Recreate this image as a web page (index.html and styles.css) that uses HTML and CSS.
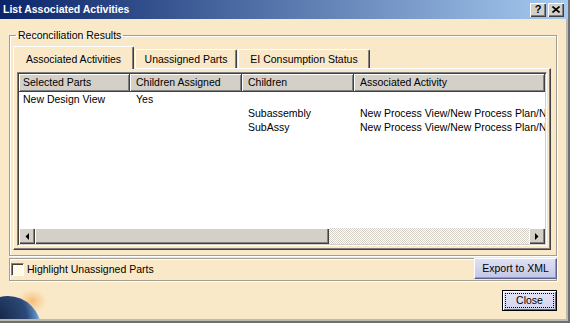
FILE: index.html
```html
<!DOCTYPE html>
<html lang="en">
<head>
    <meta charset="UTF-8" />
    <title>List Associated Activities</title>
    <link rel="stylesheet" href="styles.css">
</head>
<body>
    <div class="window">
        <div class="titlebar">
            <span class="title">List Associated Activities</span>
            <div class="caption-buttons">
                <span class="cap-btn help">?</span>
                <span class="cap-btn">
                    <svg width="8" height="7" viewBox="0 0 8 7"><path d="M0.5 0.5L7.5 6.5M7.5 0.5L0.5 6.5" stroke="#000" stroke-width="1.6"/></svg>
                </span>
            </div>
        </div>

        <div class="content">
            <fieldset class="group">
                <legend>Reconciliation Results</legend>

                <div class="tabs">
                    <div class="tab active" style="width: 121px">Associated Activities</div>
                    <div class="tab" style="width: 102px">Unassigned Parts</div>
                    <div class="tab" style="width: 132px">EI Consumption Status</div>
                </div>

                <div class="tab-panel">
                    <div class="list">
                        <div class="list-header">
                            <div class="hcell first">Selected Parts</div>
                            <div class="hcell">Children Assigned</div>
                            <div class="hcell">Children</div>
                            <div class="hcell">Associated Activity</div>
                        </div>
                        <div class="list-body">
                            <div class="row">
                                <div class="cell first">New Design View</div>
                                <div class="cell">Yes</div>
                                <div class="cell"></div>
                                <div class="cell"></div>
                            </div>
                            <div class="row">
                                <div class="cell first"></div>
                                <div class="cell"></div>
                                <div class="cell">Subassembly</div>
                                <div class="cell">New Process View/New Process Plan/N</div>
                            </div>
                            <div class="row">
                                <div class="cell first"></div>
                                <div class="cell"></div>
                                <div class="cell">SubAssy</div>
                                <div class="cell">New Process View/New Process Plan/N</div>
                            </div>
                        </div>
                        <div class="hscroll">
                            <span class="sb-btn">
                                <svg width="4" height="7" viewBox="0 0 4 7"><polygon points="4,0 4,7 0.5,3.5" fill="#000"/></svg>
                            </span>
                            <span class="sb-thumb"></span>
                            <span class="sb-track"></span>
                            <span class="sb-btn">
                                <svg width="4" height="7" viewBox="0 0 4 7"><polygon points="0,0 0,7 3.5,3.5" fill="#000"/></svg>
                            </span>
                        </div>
                    </div>
                </div>
            </fieldset>

            <div class="options">
                <span class="checkbox"></span>
                <span class="check-label">Highlight Unassigned Parts</span>
                <button class="btn export">Export to XML</button>
            </div>

            <div class="footer">
                <button class="btn close"><span class="focus">Close</span></button>
            </div>
        </div>

        <!-- logo in the corner -->
        <svg class="logo" width="56" height="34" viewBox="0 0 56 34">
            <defs>
                <radialGradient id="glow" cx="0.5" cy="0.5" r="0.5">
                    <stop offset="0" stop-color="#f3ad58" stop-opacity="0.75"/>
                    <stop offset="0.6" stop-color="#f6c786" stop-opacity="0.35"/>
                    <stop offset="1" stop-color="#fae9c8" stop-opacity="0"/>
                </radialGradient>
                <radialGradient id="globe" cx="0.3" cy="0.35" r="0.7">
                    <stop offset="0" stop-color="#142240"/>
                    <stop offset="0.7" stop-color="#2c4a78"/>
                    <stop offset="0.9" stop-color="#5b8fc4"/>
                    <stop offset="1" stop-color="#a8cce6"/>
                </radialGradient>
            </defs>
            <ellipse cx="32" cy="16" rx="17" ry="14" fill="url(#glow)"/>
            <circle cx="8" cy="44" r="33" fill="url(#globe)"/>
        </svg>
    </div>
</body>
</html>
```

FILE: styles.css
```css
:root {
    --beige: #fae9c8;
    --face: #d4d0c8;
    --shadow: #808080;
    --dark: #404040;
    --etch: #a29e92;
}

* {
    margin: 0;
    padding: 0;
    box-sizing: border-box;
}

body {
    font-family: "Liberation Sans", Arial, sans-serif;
    font-size: 10.5px;
    line-height: 13px;
    color: #000;
    background: var(--beige);
}

.window {
    position: relative;
    width: 570px;
    height: 323px;
    background: var(--beige);
    border-right: 2px solid #6f6f6f;
    border-bottom: 2px solid #6f6f6f;
    box-shadow: inset -2px -2px 0 #bdbab2;
    display: flex;
    flex-direction: column;
    overflow: hidden;
}

/* title bar */
.titlebar {
    height: 19px;
    display: flex;
    align-items: center;
    padding: 0 4px 0 3px;
    background: linear-gradient(to right, #0a246a, #a6caf0);
}

.title {
    color: #fff;
    font-weight: bold;
}

.caption-buttons {
    margin-left: auto;
    display: flex;
    gap: 2px;
}

.cap-btn {
    width: 16px;
    height: 14px;
    display: flex;
    align-items: center;
    justify-content: center;
    background: var(--face);
    box-shadow: inset 1px 1px 0 #fff, inset -1px -1px 0 var(--dark), inset -2px -2px 0 var(--shadow);
}

.cap-btn.help {
    font-weight: bold;
    font-size: 11px;
    padding-bottom: 1px;
}

/* main area */
.content {
    flex: 1;
    display: flex;
    flex-direction: column;
    padding: 0 11px 0 9px;
}

.group {
    margin-top: 10px;
    border: 1px solid var(--etch);
    box-shadow: 1px 1px 0 #fff, inset 1px 1px 0 #fff;
    padding: 4px 5px 5px 3px;
}

.group legend {
    margin-left: 3px;
    padding: 0 2px;
}

.tabs {
    display: flex;
    align-items: flex-end;
    gap: 1px;
    height: 22px;
}

.tab {
    height: 19px;
    padding-top: 3px;
    text-align: center;
    white-space: nowrap;
    background: var(--beige);
    border-top: 1px solid #fff;
    border-left: 1px solid #fff;
    border-right: 1px solid var(--dark);
    border-radius: 2px 2px 0 0;
    box-shadow: inset -1px 0 0 var(--shadow);
}

.tab.active {
    height: 23px;
    padding-top: 6px;
    margin-bottom: -1px;
    position: relative;
    z-index: 1;
}

.tab-panel {
    height: 182px;
    display: flex;
    flex-direction: column;
    padding: 3px;
    border-top: 1px solid #fff;
    border-left: 1px solid #fff;
    border-right: 1px solid var(--dark);
    border-bottom: 1px solid var(--dark);
    box-shadow: inset -1px -1px 0 var(--shadow);
}

/* list view */
.list {
    flex: 1;
    display: flex;
    flex-direction: column;
    background: #fff;
    padding: 1px;
    border-top: 1px solid var(--shadow);
    border-left: 1px solid var(--shadow);
    border-right: 1px solid #fff;
    border-bottom: 1px solid #fff;
    box-shadow: inset 1px 1px 0 var(--dark), inset -1px -1px 0 var(--face);
    overflow: hidden;
}

.list-header,
.row {
    display: grid;
    grid-template-columns: 111px 112px 112px 1fr;
}

.hcell {
    height: 18px;
    padding: 2px 0 0 6px;
    background: var(--face);
    white-space: nowrap;
    border-right: 1px solid var(--dark);
    border-bottom: 1px solid var(--dark);
    box-shadow: inset 1px 1px 0 #fff, inset -1px -1px 0 var(--shadow);
}

.hcell.first {
    padding-left: 4px;
}

.list-body {
    flex: 1;
    overflow: hidden;
}

.row {
    height: 14px;
    line-height: 14px;
}

.cell {
    padding-left: 6px;
    white-space: nowrap;
    overflow: hidden;
}

.cell.first {
    padding-left: 4px;
}

/* horizontal scrollbar */
.hscroll {
    height: 16px;
    display: flex;
}

.sb-btn,
.sb-thumb {
    background: var(--face);
    box-shadow: inset 1px 1px 0 #fff, inset -1px -1px 0 var(--dark), inset -2px -2px 0 var(--shadow);
}

.sb-btn {
    width: 16px;
    display: flex;
    align-items: center;
    justify-content: center;
}

.sb-thumb {
    width: 294px;
}

.sb-track {
    flex: 1;
    background-color: #fff;
    background-image: conic-gradient(var(--face) 25%, #fff 0 50%, var(--face) 0 75%, #fff 0);
    background-size: 2px 2px;
}

/* options row */
.options {
    margin-top: 2px;
    height: 23px;
    display: flex;
    align-items: center;
    padding-left: 1px;
    border: 1px solid var(--etch);
    box-shadow: 1px 1px 0 #fff, inset 1px 1px 0 #fff;
}

.checkbox {
    width: 13px;
    height: 13px;
    background: #fffbea;
    border-top: 1px solid var(--shadow);
    border-left: 1px solid var(--shadow);
    border-right: 1px solid #fff;
    border-bottom: 1px solid #fff;
    box-shadow: inset 1px 1px 0 var(--dark);
}

.check-label {
    margin-left: 3px;
}

.btn {
    font: inherit;
    color: #000;
    height: 21px;
    background: linear-gradient(#dfe1f3, #c3c7e6);
    border: 1px solid;
    border-color: #fff #5e6290 #5e6290 #fff;
    box-shadow: inset -1px -1px 0 #9599c0;
}

.btn.export {
    align-self: flex-start;
    width: 83px;
    margin: -1px -1px 0 auto;
}

.footer {
    margin-top: 9px;
    display: flex;
    justify-content: flex-end;
}

.btn.close {
    width: 55px;
    border-color: #000;
    background: linear-gradient(#e6e6f6, #d2d4ee);
    box-shadow: inset 1px 1px 0 #fff, inset -1px -1px 0 #5e6290;
    padding: 2px;
}

.btn.close .focus {
    display: block;
    height: 15px;
    line-height: 13px;
    border: 1px dotted #000;
}

.logo {
    position: absolute;
    left: 0;
    bottom: 2px;
}
```
